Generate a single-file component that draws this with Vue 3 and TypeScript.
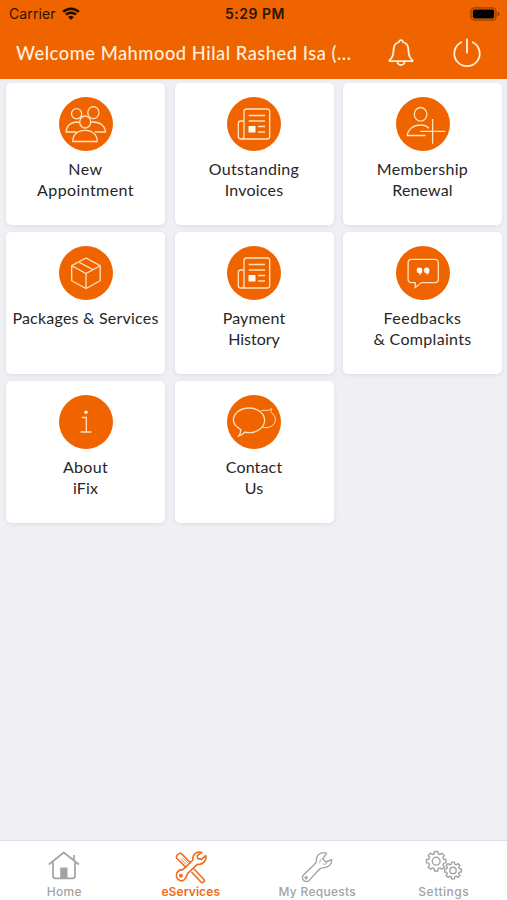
<script setup lang="ts">
interface Line { text: string; spacing: number }
interface Tile { icon: string; lines: Line[] }
interface Tab { icon: string; label: string; active?: boolean; spacing: number }

const line = (text: string, spacing = 0.3): Line => ({ text, spacing })

const tiles: Tile[] = [
  { icon: 'people', lines: [line('New', 0.5), line('Appointment', 0.4)] },
  { icon: 'news', lines: [line('Outstanding', 0.32), line('Invoices', 0.2)] },
  { icon: 'member', lines: [line('Membership', 0.32), line('Renewal', 0.15)] },
  { icon: 'box', lines: [line('Packages & Services', 0.22)] },
  { icon: 'news', lines: [line('Payment', 0.15), line('History', 0)] },
  { icon: 'quote', lines: [line('Feedbacks', 0.45), line('& Complaints', 0.32)] },
  { icon: 'info', lines: [line('About'), line('iFix', 0.1)] },
  { icon: 'chat', lines: [line('Contact', 0.15), line('Us', 0.1)] },
]

const tabs: Tab[] = [
  { icon: 'home', label: 'Home', spacing: 0.3 },
  { icon: 'tools', label: 'eServices', active: true, spacing: 0.1 },
  { icon: 'wrench', label: 'My Requests', spacing: 0.27 },
  { icon: 'gears', label: 'Settings', spacing: 0.5 },
]

// Outline of a cog with rectangular teeth, centred on (cx, cy).
function gear(cx: number, cy: number, outer: number, inner: number): string {
  const points: string[] = []
  const add = (r: number, a: number) =>
    points.push(`${(cx + r * Math.cos(a)).toFixed(2)} ${(cy + r * Math.sin(a)).toFixed(2)}`)
  for (let i = 0; i < 8; i++) {
    const a = (i * Math.PI) / 4
    add(inner, a - 0.26)
    add(outer, a - 0.17)
    add(outer, a + 0.17)
    add(inner, a + 0.26)
  }
  return `M${points.join('L')}Z`
}
const bigGear = gear(11.2, 11.2, 9.9, 7.7)
const smallGear = gear(28, 20.5, 8.5, 6.5)
</script>

<template>
  <div class="screen">
    <header class="header">
      <div class="status">
        <div class="carrier">
          <span>Carrier</span>
          <svg class="wifi" viewBox="0 0 18 13" width="18" height="13">
            <path d="M1.2 4.8a11.2 11.2 0 0 1 15.6 0M4 7.7a7.2 7.2 0 0 1 10 0" />
            <path class="solid" d="M6.2 10.1a4.1 4.1 0 0 1 5.6 0L9 12.9z" />
          </svg>
        </div>
        <span class="time">5:29 PM</span>
        <div class="power-level">
          <svg viewBox="0 0 31 14" width="31" height="14">
            <rect class="shell" x="1" y="0.8" width="25" height="12.4" rx="3.6" />
            <rect x="2.8" y="2.6" width="21.4" height="8.8" rx="1.8" />
            <path class="cap" d="M27.6 4.8q2 .5 2 2.2t-2 2.2z" />
          </svg>
        </div>
      </div>
      <div class="bar">
        <h1 class="title">Welcome Mahmood Hilal Rashed Isa (...</h1>
        <svg class="action bell" viewBox="0 0 28 30" width="28" height="30">
          <path d="M14 2.2c1.2 0 1.9.8 2 1.8 4 1 5.5 4.300 5.500 8.500 0 5.500 1.300 7.500 4 9.700v.9h-23v-.9c2.700-2.200 4-4.200 4-9.700 0-4.200 1.500-7.500 5.500-8.500.1-1 .8-1.800 2-1.800z" />
          <path d="M10.300 23.300a3.700 3.700 0 0 0 7.400 0" />
        </svg>
        <svg class="action power" viewBox="0 0 30 30" width="30" height="30">
          <path d="M15 1.500v13M9.200 4.200a12.700 12.700 0 1 0 11.600 0" />
        </svg>
      </div>
    </header>

    <main class="grid">
      <article v-for="(tile, i) in tiles" :key="i" class="card">
        <svg class="badge" viewBox="0 0 54 54" width="54" height="54">
          <circle class="disc" cx="27" cy="27" r="27" />
          <g v-if="tile.icon === 'people'">
            <circle cx="17.600" cy="16.700" r="5.100" />
            <ellipse cx="34.400" cy="15.600" rx="5.600" ry="6" />
            <ellipse cx="26.200" cy="25" rx="5.500" ry="6" />
            <path d="M13.800 44.500c0-7 5-11.200 12.200-11.200s12.200 4.200 12.200 11.200zM17.500 35H7.200c0-5.800 4.300-10 11-10l2.500.3M31.900 25.200l2-.2c7.300 0 12.400 3.800 12.500 10H36" />
          </g>
          <g v-else-if="tile.icon === 'news'">
            <path d="M17 24h-3.200q-2.500 0-2.500 2.500v13q0 2.500 2.800 2.500h26q2.600 0 2.600-2.500v-25q0-2.500-2.500-2.500H19.500q-2.500 0-2.500 2.500v25q0 2.500-2.800 2.500" />
            <path d="M21.700 18.500H38M21.700 24H38M31 29.500h7M31 35h7" />
            <rect class="fill" x="21.500" y="29" width="7" height="6.500" />
          </g>
          <g v-else-if="tile.icon === 'member'">
            <ellipse cx="24.600" cy="17.300" rx="6.300" ry="6.800" />
            <path d="M29.500 38.500H11.300c.5-6 6-10.500 13-10.500 3.500 0 6.500 1 8.700 3.200M36.600 22v24.800M24.300 34.300h25" />
          </g>
          <g v-else-if="tile.icon === 'box'">
            <path d="M27 12l14.200 7.700v15L27 42.500l-14.300-7.800v-15zM12.700 19.700L27 27.500l14.200-7.800M27 27.500v15M19.600 16L34 23.600" />
          </g>
          <g v-else-if="tile.icon === 'quote'">
            <path d="M15.500 13.400h23.400q3.400 0 3.400 3.400v16.400q0 3.400-3.400 3.400H25.500L19.200 41.400v-4.800h-3.700q-3.400 0-3.400-3.400V16.800q0-3.400 3.400-3.400z" />
            <path class="fill" d="M26.300 24.300a2.800 2.800 0 1 0-2.500 2.700q-.2 1.200-1.300 1.900 3.800-.3 3.800-4.600zM33.400 24.300a2.800 2.800 0 1 0-2.500 2.700q-.2 1.200-1.300 1.900 3.800-.3 3.800-4.600z" />
          </g>
          <g v-else-if="tile.icon === 'info'">
            <circle class="fill" cx="27" cy="17.200" r="1.700" />
            <path d="M22.700 22.500h4.600V37M21.500 37h11" />
          </g>
          <g v-else>
            <path d="M13.700 34.500C9 31.700 6.400 29 6.400 25.300 6.400 18.500 13.300 13 22 13s15.600 5.500 15.600 12.300S30.700 37.700 22 37.700c-1.500 0-2.900-.1-4.200-.5-1.700 2-3.700 3.400-6.200 3.900 1.700-2 2.300-4 2.100-6.600z" />
            <path class="thin" d="M34.500 15.700c2.200-.6 4.200-.6 6.300 0 1.200-.9 2.500-1.600 4-1.900-.8 1.100-1 2.300-.7 3.500 5.800 4.300 5.400 10.700.6 13.700-2.700 1.700-6 2-9.200 1.300" />
          </g>
        </svg>
        <div class="label">
          <span v-for="l in tile.lines" :key="l.text" :style="{ letterSpacing: l.spacing + 'px' }">{{ l.text }}</span>
        </div>
      </article>
    </main>

    <nav class="tabs">
      <div v-for="tab in tabs" :key="tab.label" class="tab" :class="{ active: tab.active }">
        <svg v-if="tab.icon === 'home'" viewBox="0 0 36 34" width="36" height="34">
          <path class="house" d="M2.800 14.500L17.800 2.500 33 14.500M7 12.300v13.700q0 2.300 2.300 2.300h17.400q2.300 0 2.300-2.300V12.300M28 10.500V5" />
          <path class="door" d="M14.200 17.500h7.300v11h-7.300z" />
        </svg>
        <svg v-else-if="tab.icon === 'tools'" viewBox="0 0 36 34" width="36" height="34">
          <path d="M13.300 17.800L4.200 8.700c-1.300-1.400-.9-2.800.5-4.200 1.500-1.400 3-1.700 4.300-.4l9 9.200M21 19l9.600 10c2 2.300-.7 4.800-2.900 2.800L18.500 22" />
          <path d="M28.800 2.500c-5.200-1.500-9.600 2-8.900 7.500L9.800 19.600c-4-.2-7 2.800-6.400 6.600.6 3.800 4.600 5.700 7.700 3.600 2.300-1.500 2.600-3.800 3.400-6.200l9.800-9.200c5.500.5 9.600-3.700 8.500-8.900l-4.200 3.900-3.700-.8-.7-2.900z" />
          <circle cx="7.900" cy="25.800" r="1.200" />
          <path class="detail" d="M7.600 9l5.400 5.300M9.700 7.800l5 4.900M11.300 6.300l2.800 2.800" />
        </svg>
        <svg v-else-if="tab.icon === 'wrench'" viewBox="0 0 36 34" width="36" height="34">
          <path d="M27.500 3.200c-5.200-1.800-10.200 1.500-10.100 7.200 0 1.800-.8 3-2 4.200L4.700 24.800c-1.700 1.700-1.700 4.200 0 5.800 1.700 1.500 4.200 1.300 5.700-.5l9.400-10.300c1-1.300 2.300-1.900 4-1.900 5.400-.2 9.200-3.500 8.900-8.200l-5.700 2.300-3.200-3.100z" />
          <circle cx="7.200" cy="27.800" r="1" />
          <path class="detail" d="M20.800 13.300c0-2 .3-3.500 1.800-4.500M24 14c1.800.5 3 0 4.200-1.200" />
        </svg>
        <svg v-else viewBox="0 0 38 34" width="38" height="34">
          <path :d="bigGear" /><circle cx="11.200" cy="11.200" r="3.900" />
          <path :d="smallGear" /><circle cx="28" cy="20.500" r="3.200" />
        </svg>
        <span :style="{ letterSpacing: tab.spacing + 'px' }">{{ tab.label }}</span>
      </div>
    </nav>
  </div>
</template>

<style>
body { background: #f0eff4; }
</style>

<style scoped>
.screen {
  display: flex;
  flex-direction: column;
  height: 900px;
  background: #f0eff4;
  font-family: Lato, "Liberation Sans", sans-serif;
  overflow: hidden;
}
.header { height: 79px; background: #f06400; flex: none; }
.status {
  display: grid;
  grid-template-columns: 1fr auto 1fr;
  align-items: center;
  height: 27px;
  padding: 0 6px 0 9px;
  font: 500 14px/27px Inter, sans-serif;
  color: #291400;
}
.carrier { display: flex; align-items: center; gap: 6px; font-weight: 400; letter-spacing: 0.100px; }
.wifi path { fill: none; stroke: #1c0d00; stroke-width: 2.500; }
.wifi .solid { fill: #1c0d00; stroke: none; }
.time { font-weight: 600; letter-spacing: 0.500px; }
.power-level { display: flex; justify-content: flex-end; }
.power-level rect { fill: #000; }
.power-level .shell { fill: none; stroke: #984000; stroke-width: 1.300; }
.power-level .cap { fill: #984000; }
.bar { display: flex; align-items: center; height: 52px; padding: 0 25px 0 16px; }
.title {
  flex: 1;
  margin: 0;
  color: #fff0dc;
  font-size: 18.300px;
  font-weight: 500;
  line-height: 52px;
  letter-spacing: 0.530px;
  white-space: nowrap;
}
.action { fill: none; stroke: #fff0dc; stroke-width: 1.800; stroke-linecap: round; flex: none; }
.bell { margin-right: 37px; }
.grid {
  display: grid;
  grid-template-columns: repeat(3, 159px);
  grid-auto-rows: 142px;
  gap: 7px 9.500px;
  padding: 4px 0 0 6px;
  flex: 1;
  align-content: start;
}
.card {
  display: flex;
  flex-direction: column;
  align-items: center;
  padding-top: 14px;
  background: #fff;
  border-radius: 5px;
  box-shadow: 0 1px 4px rgba(60, 60, 80, 0.100);
  box-sizing: border-box;
}
.badge { fill: none; stroke: #ffe2bd; stroke-width: 1.300; flex: none; }
.badge .disc { fill: #f06400; stroke: none; }
.badge .fill { fill: #fff8ef; stroke: none; }
.badge .thin { stroke-width: 1; }
.label {
  display: flex;
  flex-direction: column;
  align-items: center;
  margin-top: 7px;
  color: #262626;
  font-size: 16px;
  line-height: 21.300px;
  white-space: nowrap;
}
.tabs {
  display: grid;
  grid-template-columns: repeat(4, 126.500px);
  height: 60px;
  box-sizing: border-box;
  border-top: 1.500px solid #dfdee3;
  padding-left: 1px;
  background: #fff;
  flex: none;
}
.tab {
  display: flex;
  flex-direction: column;
  align-items: center;
  padding-top: 9px;
  color: #a3a3a3;
  font: 500 12px/16px Inter, sans-serif;
}
.tab svg { fill: none; stroke: currentColor; stroke-width: 1.400; stroke-linejoin: round; flex: none; }
.tab .house { stroke-width: 1.700; }
.tab .door { fill: currentColor; stroke: none; }
.tab .detail { stroke-width: 0.900; }
.tab.active { color: #ee6c1c; font-weight: 600; }
.tab.active svg { stroke-width: 1.600; }
</style>
